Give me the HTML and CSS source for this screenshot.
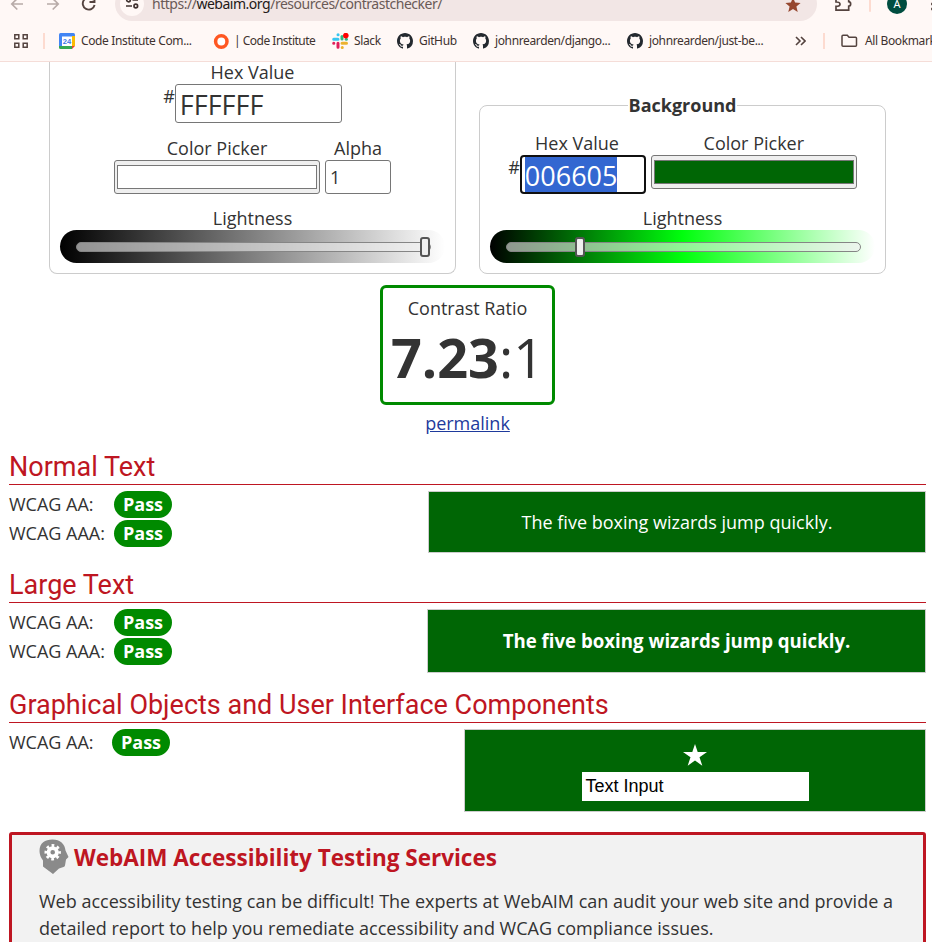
FILE: index.html
```html
<!DOCTYPE html>
<html lang="en">
<head>
<meta charset="utf-8">
<title>WebAIM: Contrast Checker</title>
<link rel="stylesheet" href="styles.css">
</head>
<body>
<svg width="0" height="0" class="defs">
  <symbol id="github" viewBox="0 0 16 16"><path d="M8 0C3.58 0 0 3.58 0 8c0 3.54 2.29 6.53 5.47 7.59.4.07.55-.17.55-.38 0-.19-.01-.82-.01-1.49-2.01.37-2.53-.49-2.69-.94-.09-.23-.48-.94-.82-1.13-.28-.15-.68-.52-.01-.53.63-.01 1.08.58 1.23.82.72 1.21 1.87.87 2.33.66.07-.52.28-.87.51-1.07-1.78-.2-3.64-.89-3.64-3.95 0-.87.31-1.59.82-2.15-.08-.2-.36-1.02.08-2.12 0 0 .67-.21 2.2.82.64-.18 1.32-.27 2-.27s1.36.09 2 .27c1.53-1.04 2.2-.82 2.2-.82.44 1.1.16 1.92.08 2.12.51.56.82 1.27.82 2.15 0 3.07-1.87 3.75-3.65 3.95.29.25.54.73.54 1.48 0 1.07-.01 1.93-.01 2.2 0 .21.15.46.55.38A8.01 8.01 0 0 0 16 8c0-4.42-3.58-8-8-8z" fill="#24292f"/></symbol>
</svg>
<header class="chrome">
  <div class="toolbar">
    <svg class="nav-icons" width="115" height="21" viewBox="0 0 115 21" fill="none" stroke-width="1.7">
      <g stroke="#b8aba8"><path d="M23 4H12M17.3-1.5 11.800 4l5.500 5.500M47 4h11M52.700-1.500 58.200 4l-5.500 5.500"/></g>
      <path d="M93.600 0A6 6 0 1 0 94.600 5M94.500-3v5h-5" stroke="#54433f" stroke-width="1.900"/>
    </svg>
    <div class="omnibox">
      <span class="site-info"><svg width="14" height="14" viewBox="0 0 14 14" fill="none" stroke="#40322f" stroke-width="1.700"><path d="M7.500 4H13M1 10h6"/><circle cx="3.500" cy="4" r="1.800"/><circle cx="10.800" cy="10" r="1.800"/></svg></span>
      <span class="url">https://<b>webaim.org</b>/resources/contrastchecker/</span>
      <svg class="fav" width="16" height="16" viewBox="0 0 16 16"><path d="M8 .5l2.100 5.100 5.500.4-4.200 3.600 1.300 5.400L8 12.100 3.300 15l1.300-5.400L.4 6l5.500-.4z" fill="#96472f"/></svg>
    </div>
    <svg class="tools" width="115" height="21" viewBox="817 0 115 21">
      <path d="M836-2v4c3 0 4 1 4 2.200s-1 2.200-4 2.200v3.800h12.700v-4c2.600-.3 2.600-4.200 0-4.500V-2" fill="none" stroke="#54433f" stroke-width="1.700"/>
      <path d="M870-4V11" stroke="#fddbd0" stroke-width="2" stroke-linecap="round"/>
      <circle cx="897" cy="4" r="10" fill="#004d40"/>
      <text x="897" y="8" text-anchor="middle" class="avatar">A</text>
      <circle cx="932.500" cy="4" r="1.500" fill="#54433f"/><circle cx="932.500" cy="9" r="1.500" fill="#54433f"/>
    </svg>
  </div>
  <nav class="bookmarks">
    <svg class="apps" width="14" height="14" viewBox="0 0 14 14" fill="none" stroke="#54433f" stroke-width="1.500"><path d="M.8.800h4v4h-4zM9.200.800h4v4h-4zM.8 9.200h4v4h-4zM9.200 9.200h4v4h-4z"/></svg>
    <i class="bar"></i>
    <a class="bm wide"><svg width="16" height="16" viewBox="0 0 16 16"><path d="M0 1.500Q0 0 1.500 0h13Q16 0 16 1.500V4H0z" fill="#4285f4"/><path d="M0 3h3v10H0z" fill="#4285f4"/><path d="M13 3h3v10h-3z" fill="#fbbc04"/><path d="M0 13h13v3H1.500Q0 16 0 14.500z" fill="#34a853"/><path d="M13 13h3l-3 3z" fill="#ea4335"/><path d="M3 3.500h10V13H3z" fill="#fff"/><text x="8" y="11" text-anchor="middle" class="cal">24</text></svg><span>Code Institute Com...</span></a>
    <a class="bm mid"><svg width="16" height="16" viewBox="0 0 16 16"><circle cx="8.300" cy="8.500" r="5.700" fill="#fff" stroke="#ff5722" stroke-width="3.500"/></svg><span>| Code Institute</span></a>
    <a class="bm slack"><svg width="17" height="16" viewBox="0 0 17 16" stroke-width="3" stroke-linecap="round"><path d="M1.700 6.200H6M6 1.700h.1" stroke="#36c5f0"/><path d="M10 6V3.500" stroke="#2eb67d"/><path d="M10 10.200h4.500M10.200 14.400h.1" stroke="#ecb22e"/><path d="M6 10.200v4M1.700 10.200h.1" stroke="#e01e5a"/><path d="M14.300 6.300h.1" stroke="#2eb67d"/><circle cx="13.800" cy="2.600" r="2.800" fill="#f00"/></svg><span>Slack</span></a>
    <a class="bm gh"><svg width="16" height="16"><use href="#github"/></svg><span>GitHub</span></a>
    <a class="bm wide"><svg width="16" height="16"><use href="#github"/></svg><span>johnrearden/django...</span></a>
    <a class="bm last"><svg width="16" height="16"><use href="#github"/></svg><span>johnrearden/just-be...</span></a>
    <svg class="more" width="11" height="10" viewBox="0 0 11 10" fill="none" stroke="#54433f" stroke-width="1.600"><path d="M1 1l4 4-4 4M6 1l4 4-4 4"/></svg>
    <i class="bar bar2"></i>
    <a class="bm all"><svg width="17" height="14" viewBox="0 0 17 14" fill="none" stroke="#54433f" stroke-width="1.500"><path d="M2 1.300h4.300l1.700 2h6.500q1 0 1 1v7q0 1-1 1H2q-1 0-1-1v-9q0-1 1-1z"/></svg><span>All Bookmarks</span></a>
  </nav>
</header>
<main>
  <div class="pickers">
    <section class="panel fg">
      <div class="label">Hex Value</div>
      <div class="hexrow"><span class="hash">#</span><div class="hex long">FFFFFF</div></div>
      <div class="row">
        <div class="field"><div class="label">Color Picker</div><div class="swatch"><i></i></div></div>
        <div class="field"><div class="label">Alpha</div><div class="alpha">1</div></div>
      </div>
      <div class="label">Lightness</div>
      <div class="slider grey"><div class="track"><i class="thumb"></i></div></div>
    </section>
    <section class="panel bg">
      <div class="legend"><b>Background</b></div>
      <div class="row">
        <div class="field hexfield"><div class="label">Hex Value</div><div class="hexrow"><span class="hash">#</span><div class="hex focus"><mark>006605</mark></div></div></div>
        <div class="field"><div class="label">Color Picker</div><div class="swatch green"><i></i></div></div>
      </div>
      <div class="label">Lightness</div>
      <div class="slider lime"><div class="track"><i class="thumb"></i></div></div>
    </section>
  </div>
  <div class="ratio"><div class="label">Contrast Ratio</div><div class="value"><b>7.23</b>:1</div></div>
  <a class="permalink">permalink</a>

  <section class="result">
    <h2>Normal Text</h2>
    <div class="body">
      <div class="grades">
        <div class="grade"><span>WCAG AA:</span><b>Pass</b></div>
        <div class="grade"><span>WCAG AAA:</span><b>Pass</b></div>
      </div>
      <div class="sample normal">The five boxing wizards jump quickly.</div>
    </div>
  </section>
  <section class="result">
    <h2>Large Text</h2>
    <div class="body">
      <div class="grades">
        <div class="grade"><span>WCAG AA:</span><b>Pass</b></div>
        <div class="grade"><span>WCAG AAA:</span><b>Pass</b></div>
      </div>
      <div class="sample large">The five boxing wizards jump quickly.</div>
    </div>
  </section>
  <section class="result objects">
    <h2>Graphical Objects and User Interface Components</h2>
    <div class="body">
      <div class="grades"><div class="grade"><span>WCAG AA:</span><b>Pass</b></div></div>
      <div class="sample ui">
        <svg width="24" height="22" viewBox="0 0 24 22"><path d="M12 0l2.700 8H24l-7.500 5.200 2.800 8.500L12 16.500l-7.300 5.200 2.800-8.500L0 8h9.300z" fill="#fff"/></svg>
        <div class="textinput">Text Input</div>
      </div>
    </div>
  </section>

  <aside class="services">
    <h3><svg width="31" height="36" viewBox="0 0 31 36"><path d="M.5 12C.5 4 6 .5 13.500 .5S26 5 26.500 11.500L29.500 18l-2.500 2.500-1 6q-.3 1-1.500 1.500L20 29.500l-6 5.500L4 27.500V21.500Q.5 17 .5 12z" fill="#8a8a8a"/><circle cx="13.700" cy="13.300" r="4.200" fill="none" stroke="#fff" stroke-width="3.800"/><circle cx="13.700" cy="13.300" r="6.800" fill="none" stroke="#fff" stroke-width="2.800" stroke-dasharray="2.700 2.641" stroke-dashoffset="1.350"/></svg><span>WebAIM Accessibility Testing Services</span></h3>
    <p>Web accessibility testing can be difficult! The experts at WebAIM can audit your web site and provide a detailed report to help you remediate accessibility and WCAG compliance issues.</p>
  </aside>
</main>
</body>
</html>
```
FILE: styles.css
```css
* { box-sizing: border-box; }
html, body { margin: 0; height: 942px; overflow: hidden; }
body { background: #fff; color: #333; font: 18px/20px "Open Sans", sans-serif; }
svg { display: block; flex: none; }
.defs { position: absolute; }

.chrome { height: 62px; background: #fff8f6; border-bottom: 1px solid #f5ddd8; font-family: "Noto Sans", sans-serif; color: #40322f; overflow: hidden; }
.toolbar { display: flex; height: 21px; overflow: hidden; }
.omnibox { display: flex; align-items: center; width: 702px; height: 34px; margin-top: -13px; padding-left: 5px; background: #f2e6e5; border-radius: 17px; flex: none; }
.site-info { display: flex; align-items: center; justify-content: center; width: 24px; height: 24px; border-radius: 50%; background: #fff8f6; }
.site-info svg { margin-top: -2px; }
.url { margin-left: 8px; font-size: 14px; color: #6a5a57; white-space: nowrap; letter-spacing: -.48px; }
.url b { font-weight: 400; color: #231917; }
.fav { margin: 2px 16px 0 auto; }
.avatar { font: 11px "Noto Sans", sans-serif; fill: #fff; }

.bookmarks { display: flex; align-items: center; height: 40px; font-size: 12px; white-space: nowrap; }
.apps { margin-left: 14px; }
.bar { width: 2px; height: 16px; margin: 0 14px 0 15px; background: #fddbd0; flex: none; }
.bm { display: flex; align-items: center; gap: 6px; flex: none; }
.bm span { letter-spacing: -.37px; }
.wide { width: 154px; }
.mid { width: 119px; }
.bm.mid span { letter-spacing: -.5px; margin-left: -1px; }
.slack { width: 65px; gap: 5px; }
.bm.slack span, .bm.gh span { letter-spacing: -.35px; }
.gh { width: 76px; }
.last { width: 168px; }
.cal { font: bold 7.5px "Liberation Sans", sans-serif; fill: #3b78e7; }
.bar2 { margin: 0 16px 0 17px; }
.all { gap: 7px; }

.pickers { display: flex; gap: 23px; align-items: flex-start; padding-left: 49px; height: 212px; }
.panel { width: 407px; height: 212px; border: 1px solid #ccc; padding: 0 10px; border-radius: 8px; }
.fg { border-top: 0; border-radius: 0 0 8px 8px; }
.bg { margin-top: 43px; height: 169px; }
.label { height: 20px; text-align: center; white-space: nowrap; }
.hexrow { display: flex; justify-content: center; height: 39px; margin-top: 2px; }
.hash { line-height: 24px; }
.hex { width: 126px; height: 39px; border: 1px solid #767676; border-radius: 3px; padding: 0 4px; font-size: 27px; line-height: 39px; }
.long { width: 167px; }
.row { display: flex; justify-content: center; gap: 5px; }
.fg .row { margin-top: 15px; height: 70px; }
.bg .row { height: 75px; margin-top: 18px; }
.swatch { margin-top: 2px; width: 206px; height: 34px; padding: 4px 2px; border: 1px solid #767676; border-radius: 3px; background: #efefef; }
.swatch i { display: block; height: 24px; border: 1px solid #777; background: #fff; }
.green i { background: #006605; }
.alpha { margin-top: 2px; width: 66px; height: 34px; border: 1px solid #767676; border-radius: 3px; padding-left: 4px; line-height: 33px; }
.slider { width: 385px; height: 33px; margin-top: 2px; padding: 12px 14px 0 16px; border-radius: 17px; }
.grey { background: linear-gradient(to right, #000, #fff); }
.lime { background: linear-gradient(to right, #000, #00ff0d 50%, #fff); }
.track { position: relative; height: 10px; width: 355px; border: 1px solid #858585; border-radius: 6px; background: rgba(239,239,239,.6); }
.thumb { position: absolute; top: -6px; width: 10px; height: 20px; border: 2px solid #555; border-radius: 3px; background: #efefef; }
.grey .thumb { right: 0; }
.lime .thumb { left: 68px; }
.legend { margin-top: -11px; height: 20px; text-align: center; }
.legend b { background: #fff; padding: 0 1px; display: inline-block; }
.focus { border: 2px solid #101010; border-radius: 4px; padding: 0 3px; line-height: 37px; }
.focus mark { display: block; width: 92px; height: 35px; background: #3367d1; color: #fff; line-height: 37px; }

.ratio { width: 175px; height: 120px; margin: 11px 0 0 380px; padding-top: 10px; border: 3px solid #008a00; border-radius: 6px; text-align: center; }
.value { margin-top: 9px; font-size: 54px; line-height: 60px; white-space: nowrap; }
.permalink { display: block; width: 175px; margin: 8px 0 19px 380px; text-align: center; color: #1e3a9c; text-decoration: underline; }

.result { width: 917px; height: 118px; margin-left: 9px; }
h2 { margin: 0; height: 33px; border-bottom: 1px solid #be1622; color: #be1622; font: 400 27px/30px Roboto, sans-serif; }
.body { display: flex; justify-content: space-between; padding-top: 6px; align-items: flex-start; }
.grade { display: flex; height: 27px; line-height: 27px; margin-bottom: 2px; }
.grade span { width: 105px; }
.grade b { width: 58px; border-radius: 14px; background: #008a00; color: #fff; text-align: center; }
.objects .grade span { width: 103px; }
.sample { border: 1px solid #ccc; background: #006605; color: #fff; text-align: center; }
.normal { width: 498px; height: 62px; line-height: 60px; }
.large { width: 499px; height: 64px; font-weight: 700; font-size: 18.67px; line-height: 62px; }
.ui { width: 462px; height: 83px; padding-top: 14px; }
.ui svg { margin: 0 auto; }
.textinput { width: 227px; height: 29px; margin: 6px auto 0; padding-left: 4px; background: #fff; color: #000; font: 18px/28px "Liberation Sans", sans-serif; text-align: left; }
.objects { height: 130px; margin-top: 2px; }

.services { width: 917px; height: 150px; margin: 12px 0 0 9px; border: 3px solid #be1622; border-radius: 3px; background: #f2f2f2; padding: 3px 27px 0; }
h3 { display: flex; align-items: center; gap: 4px; margin: 0; height: 37px; color: #be1622; font-size: 22.5px; line-height: 36px; }
h3 svg { margin-top: 1px; }
h3 span { margin-top: 2px; }
.services p { margin: 13px 0 0; width: 870px; line-height: 27px; }
```
